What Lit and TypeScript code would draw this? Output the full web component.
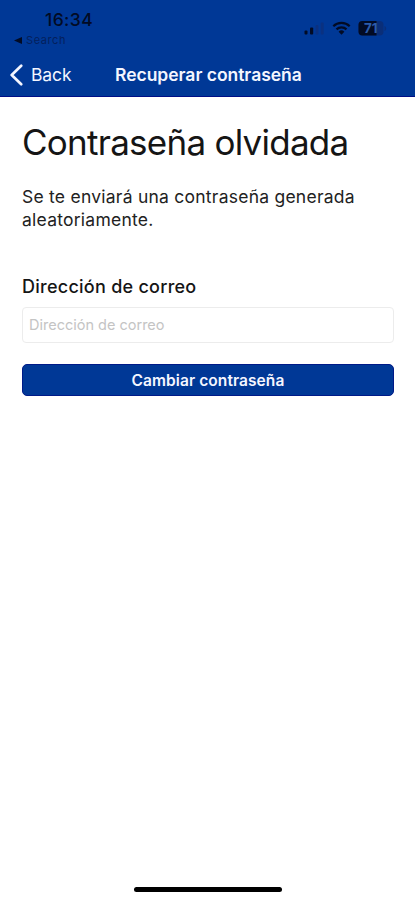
import { LitElement, html, css } from "lit";
import { customElement } from "lit/decorators.js";

@customElement("app-root")
export class AppRoot extends LitElement {
  static styles = css`
    :host { display: flex; flex-direction: column; box-sizing: border-box; width: 100%; height: 900px; background: #fff; color: #151515; font-family: Inter, "Liberation Sans", sans-serif; overflow: hidden; }
    * { box-sizing: border-box; }
    header { height: 97px; flex: none; background: #003896; border-bottom: 1px solid #000e86; }
    .status { height: 52px; display: flex; justify-content: space-between; color: #020b24; }
    .time { padding: 9px 0 0 45px; font-size: 17.5px; line-height: 22px; font-weight: 500; letter-spacing: .4px; }
    .search { padding-left: 14px; display: flex; align-items: center; gap: 4px; font-size: 11px; line-height: 18px; letter-spacing: .6px; color: #04205c; }
    .search svg { display: block; }
    .indicators { display: block; margin: 18px 27px 0 0; }
    .level { font: 700 13.5px Inter, "Liberation Sans", sans-serif; }
    .nav { height: 45px; display: grid; grid-template-columns: 115px 1fr; align-items: center; color: #f4f6ff; font-size: 17.5px; line-height: 22px; }
    .back { display: flex; align-items: center; padding-left: 9px; gap: 7px; letter-spacing: -.1px; }
    .heading { font-weight: 600; letter-spacing: -.02px; white-space: nowrap; }
    main { padding: 23px 21px 0 22px; flex: 1; display: flex; flex-direction: column; }
    h1 { margin: 0; font-size: 35px; line-height: 44px; font-weight: 400; letter-spacing: -.74px; white-space: nowrap; }
    p { margin: 22px 0 0; font-size: 17.5px; line-height: 22.5px; letter-spacing: .24px; color: #222; white-space: nowrap; }
    label { margin-top: 45px; font-size: 18px; line-height: 22px; font-weight: 500; letter-spacing: .26px; }
    .field { height: 36px; margin-top: 9px; border: 1px solid #ececec; border-radius: 4px; background: #fff; padding: 0 6px 1px; font: 400 14.5px Inter, "Liberation Sans", sans-serif; width: 100%; }
    .field::placeholder { color: #c4c4c4; opacity: 1; }
    button { height: 32px; margin-top: 21px; border: 1px solid #001a88; border-radius: 5px; background: #003896; color: #f4f6ff; padding: 0; font: 600 15.5px Inter, "Liberation Sans", sans-serif; letter-spacing: .08px; }
    .home { flex: none; align-self: center; width: 148px; height: 5px; border-radius: 3px; background: #000; margin-bottom: 8px; }
  `;

  render() {
    return html`
      <header>
        <div class="status">
          <div>
            <div class="time">16:34</div>
            <div class="search"><svg width="8" height="7" viewBox="0 0 8 7"><path d="M0 3.5 8 0v7z" fill="#020b24" /></svg><span>Search</span></div>
          </div>
          <svg class="indicators" width="84" height="20" viewBox="0 0 84 20">
            <g fill="#020b24"><rect x=".5" y="12.5" width="3" height="4" rx="1" /><rect x="6" y="9.5" width="3.2" height="7" rx="1" /></g>
            <g fill="#0a3181"><rect x="11.5" y="7" width="3" height="9.5" rx="1" /><rect x="16.7" y="4.5" width="3" height="12" rx="1" /></g>
            <g fill="none" stroke="#020b24" stroke-width="2.2"><path d="M29.3 8.2a11.6 11.6 0 0 1 16.4 0" /><path d="M32.5 11.4a7.1 7.1 0 0 1 10 0" /></g>
            <path d="M34.6 13.8a4.1 4.1 0 0 1 5.8 0L37.5 16.7z" fill="#020b24" />
            <rect x="54.5" y="3" width="25" height="14.5" rx="4" fill="#0a2e78" />
            <path d="M58.5 3H72.5V17.5H58.5a4 4 0 0 1-4-4V7a4 4 0 0 1 4-4z" fill="#020b24" />
            <path d="M80.5 8c2.2.7 2.2 4.3 0 5z" fill="#0a2e78" />
            <text class="level" x="60" y="15" fill="#2c5cab">71</text>
          </svg>
        </div>
        <div class="nav">
          <div class="back"><svg width="15" height="22" viewBox="0 0 15 22"><path d="M12.2 1.8 2.7 11l9.5 9.2" fill="none" stroke="#f4f6ff" stroke-width="2.7" stroke-linecap="round" stroke-linejoin="round" /></svg><span>Back</span></div>
          <div class="heading">Recuperar contraseña</div>
        </div>
      </header>
      <main>
        <h1>Contraseña olvidada</h1>
        <p>Se te enviará una contraseña generada<br />aleatoriamente.</p>
        <label for="mail">Dirección de correo</label>
        <input class="field" id="mail" type="email" placeholder="Dirección de correo" />
        <button type="button">Cambiar contraseña</button>
      </main>
      <div class="home"></div>
    `;
  }
}
